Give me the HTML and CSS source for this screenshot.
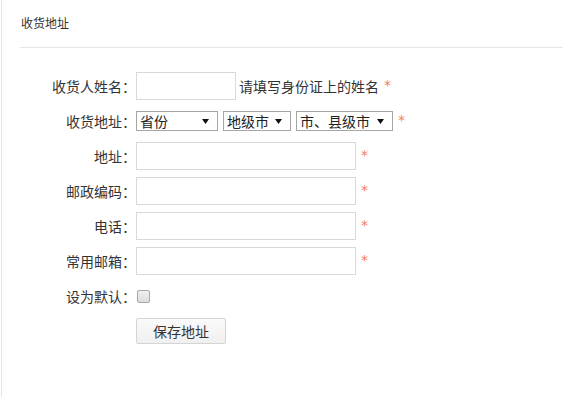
FILE: index.html
```html
<!DOCTYPE html>
<html lang="zh-CN">

<head>
    <meta charset="UTF-8">
    <meta name="viewport" content="width=device-width, initial-scale=1.0">
    <title>收货地址</title>
    <link rel="stylesheet" href="styles.css">
</head>

<body>
    <div class="panel">
        <div class="panel-head">收货地址</div>

        <form class="addr-form">
            <div class="row">
                <label class="label">收货人姓名：</label>
                <input type="text" class="text short">
                <span class="tip">请填写身份证上的姓名</span>
                <span class="req">*</span>
            </div>

            <div class="row">
                <label class="label">收货地址：</label>
                <select class="sel sel-prov">
                    <option>省份</option>
                </select>
                <select class="sel sel-city">
                    <option>地级市</option>
                </select>
                <select class="sel sel-county">
                    <option>市、县级市</option>
                </select>
                <span class="req">*</span>
            </div>

            <div class="row">
                <label class="label">地址：</label>
                <input type="text" class="text">
                <span class="req">*</span>
            </div>

            <div class="row">
                <label class="label">邮政编码：</label>
                <input type="text" class="text">
                <span class="req">*</span>
            </div>

            <div class="row">
                <label class="label">电话：</label>
                <input type="text" class="text">
                <span class="req">*</span>
            </div>

            <div class="row">
                <label class="label">常用邮箱：</label>
                <input type="text" class="text">
                <span class="req">*</span>
            </div>

            <div class="row">
                <label class="label">设为默认：</label>
                <input type="checkbox" class="check">
            </div>

            <div class="row">
                <span class="label"></span>
                <button type="button" class="btn-save">保存地址</button>
            </div>
        </form>
    </div>
</body>

</html>
```

FILE: styles.css
```css
body {
    margin: 0;
    font-family: "Noto Sans CJK SC", "Liberation Sans", sans-serif;
    color: #333;
    background-color: #fff;
}

.panel {
    margin-left: 1px;
    border-left: 1px solid #e6e6e6;
    height: 397px;
    box-sizing: border-box;
}

.panel-head {
    margin-left: 18px;
    padding: 14px 0 15px 1px;
    font-size: 12px;
    line-height: 18px;
    color: #333;
    border-bottom: 1px solid #e6e6e6;
}

.addr-form {
    padding-top: 24px;
}

.row {
    display: flex;
    align-items: center;
    height: 28px;
    margin-bottom: 7px;
    font-size: 14px;
}

.label {
    width: 134px;
    text-align: right;
    flex-shrink: 0;
}

.text {
    width: 220px;
    height: 28px;
    padding: 0 4px;
    margin: 0;
    border: 1px solid #d9d9d9;
    box-sizing: border-box;
    font-size: 14px;
    font-family: inherit;
    outline: none;
}

.text.short {
    width: 100px;
}

.tip {
    margin-left: 3px;
}

.req {
    margin-left: 5px;
    color: #f77b5e;
    font-family: "DejaVu Sans", sans-serif;
    font-size: 14px;
    line-height: 28px;
    position: relative;
    top: -1px;
}

.tip + .req {
    margin-left: 5px;
}

.sel {
    appearance: none;
    -webkit-appearance: none;
    height: 20px;
    margin: 0 5px 0 0;
    padding: 0 14px 0 3px;
    border: 1px solid #a6a6a6;
    border-radius: 0;
    background: #fff url("data:image/svg+xml;utf8,<svg xmlns='http://www.w3.org/2000/svg' width='7' height='5'><path d='M0 0h7L3.5 5z' fill='%23111'/></svg>") no-repeat right 8px center;
    font-size: 14px;
    font-family: inherit;
    line-height: 18px;
    color: #222;
    box-sizing: border-box;
}

.sel-prov {
    width: 82px;
}

.sel-city {
    width: 68px;
}

.sel-county {
    width: 97px;
}

.sel + .req {
    margin-left: 0;
}

.check {
    appearance: none;
    -webkit-appearance: none;
    width: 13px;
    height: 13px;
    margin: 0 0 0 1px;
    border: 1px solid #a8a8a8;
    border-radius: 2px;
    background: linear-gradient(#f0f0f0, #dcdcdc);
    box-sizing: border-box;
}

.btn-save {
    width: 90px;
    height: 26px;
    padding: 0;
    border: 1px solid #d4d4d4;
    border-radius: 2px;
    background: linear-gradient(#fafafa, #f0f0f0);
    font-size: 14px;
    font-family: inherit;
    color: #333;
    cursor: pointer;
}
```
